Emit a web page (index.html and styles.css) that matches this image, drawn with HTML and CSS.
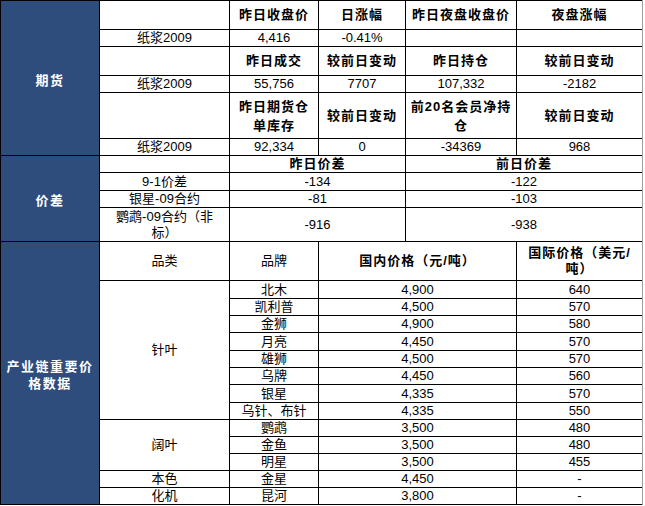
FILE: index.html
```html
<!DOCTYPE html>
<html lang="zh-CN">
<head>
<meta charset="utf-8">
<title>纸浆数据</title>
<link rel="stylesheet" href="styles.css">
</head>
<body>
<div class="sheet">
  <!-- 期货 -->
  <div class="c label span-r6">期货</div>
  <div class="c"></div>
  <div class="c h">昨日收盘价</div>
  <div class="c h">日涨幅</div>
  <div class="c h">昨日夜盘收盘价</div>
  <div class="c h">夜盘涨幅</div>

  <div class="c">纸浆2009</div>
  <div class="c">4,416</div>
  <div class="c">-0.41%</div>
  <div class="c"></div>
  <div class="c"></div>

  <div class="c"></div>
  <div class="c h">昨日成交</div>
  <div class="c h">较前日变动</div>
  <div class="c h">昨日持仓</div>
  <div class="c h">较前日变动</div>

  <div class="c">纸浆2009</div>
  <div class="c">55,756</div>
  <div class="c">7707</div>
  <div class="c">107,332</div>
  <div class="c">-2182</div>

  <div class="c"></div>
  <div class="c h wrap">昨日期货仓<br>单库存</div>
  <div class="c h">较前日变动</div>
  <div class="c h wrap">前20名会员净持<br>仓</div>
  <div class="c h">较前日变动</div>

  <div class="c">纸浆2009</div>
  <div class="c">92,334</div>
  <div class="c">0</div>
  <div class="c">-34369</div>
  <div class="c">968</div>

  <!-- 价差 -->
  <div class="c label span-r4">价差</div>
  <div class="c"></div>
  <div class="c h span-c2">昨日价差</div>
  <div class="c h span-c2">前日价差</div>

  <div class="c">9-1价差</div>
  <div class="c span-c2">-134</div>
  <div class="c span-c2">-122</div>

  <div class="c">银星-09合约</div>
  <div class="c span-c2">-81</div>
  <div class="c span-c2">-103</div>

  <div class="c tight">鹦鹉-09合约（非<br>标）</div>
  <div class="c span-c2">-916</div>
  <div class="c span-c2">-938</div>

  <!-- 产业链重要价格数据 -->
  <div class="c label span-r14">产业链重要价<br>格数据</div>
  <div class="c">品类</div>
  <div class="c">品牌</div>
  <div class="c h span-c2">国内价格（元/吨）</div>
  <div class="c h tight">国际价格（美元/<br>吨）</div>

  <div class="c span-r8">针叶</div>
  <div class="c">北木</div><div class="c span-c2">4,900</div><div class="c">640</div>
  <div class="c">凯利普</div><div class="c span-c2">4,500</div><div class="c">570</div>
  <div class="c">金狮</div><div class="c span-c2">4,900</div><div class="c">580</div>
  <div class="c">月亮</div><div class="c span-c2">4,450</div><div class="c">570</div>
  <div class="c">雄狮</div><div class="c span-c2">4,500</div><div class="c">570</div>
  <div class="c">乌牌</div><div class="c span-c2">4,450</div><div class="c">560</div>
  <div class="c">银星</div><div class="c span-c2">4,335</div><div class="c">570</div>
  <div class="c">乌针、布针</div><div class="c span-c2">4,335</div><div class="c">550</div>

  <div class="c span-r3">阔叶</div>
  <div class="c">鹦鹉</div><div class="c span-c2">3,500</div><div class="c">480</div>
  <div class="c">金鱼</div><div class="c span-c2">3,500</div><div class="c">480</div>
  <div class="c">明星</div><div class="c span-c2">3,500</div><div class="c">455</div>

  <div class="c">本色</div><div class="c">金星</div><div class="c span-c2">4,450</div><div class="c">-</div>
  <div class="c">化机</div><div class="c">昆河</div><div class="c span-c2">3,800</div><div class="c">-</div>
</div>
</body>
</html>
```

FILE: styles.css
```css
html, body {
  margin: 0;
  padding: 0;
  background: #ffffff;
}

.sheet {
  display: grid;
  width: fit-content;
  background: #000000;
  gap: 1px;
  padding: 1px 0 1px 1px;
  border-right: 1px solid #9c9c9c;
  grid-template-columns: 98px 129px 88px 86px 110px 125px;
  grid-template-rows:
    28px 16px 28px 16px 45px 16px
    16px 17px 16px 33px
    38px
    17px 16px 16px 17px 16px 16px 17px 16px 16px 16px 16px 16px 16px;
  font-family: "Liberation Sans", "Noto Sans CJK SC", sans-serif;
  font-size: 13px;
  color: #000000;
}

.c {
  background: #ffffff;
  display: flex;
  align-items: center;
  justify-content: center;
  text-align: center;
  line-height: 16px;
  white-space: nowrap;
  overflow: hidden;
}

.h {
  font-weight: bold;
  letter-spacing: 1px;
}

.wrap {
  line-height: 19px;
}

.tight {
  line-height: 16px;
}

.label {
  background: #2e4d7d;
  color: #ffffff;
  font-weight: bold;
  letter-spacing: 1.5px;
  line-height: 17px;
  padding-top: 4px;
}

.span-r6 { grid-row: span 6; }
.span-r4 { grid-row: span 4; }
.span-r14 { grid-row: span 14; }
.span-r8 { grid-row: span 8; }
.span-r3 { grid-row: span 3; }
.span-c2 { grid-column: span 2; }
```
